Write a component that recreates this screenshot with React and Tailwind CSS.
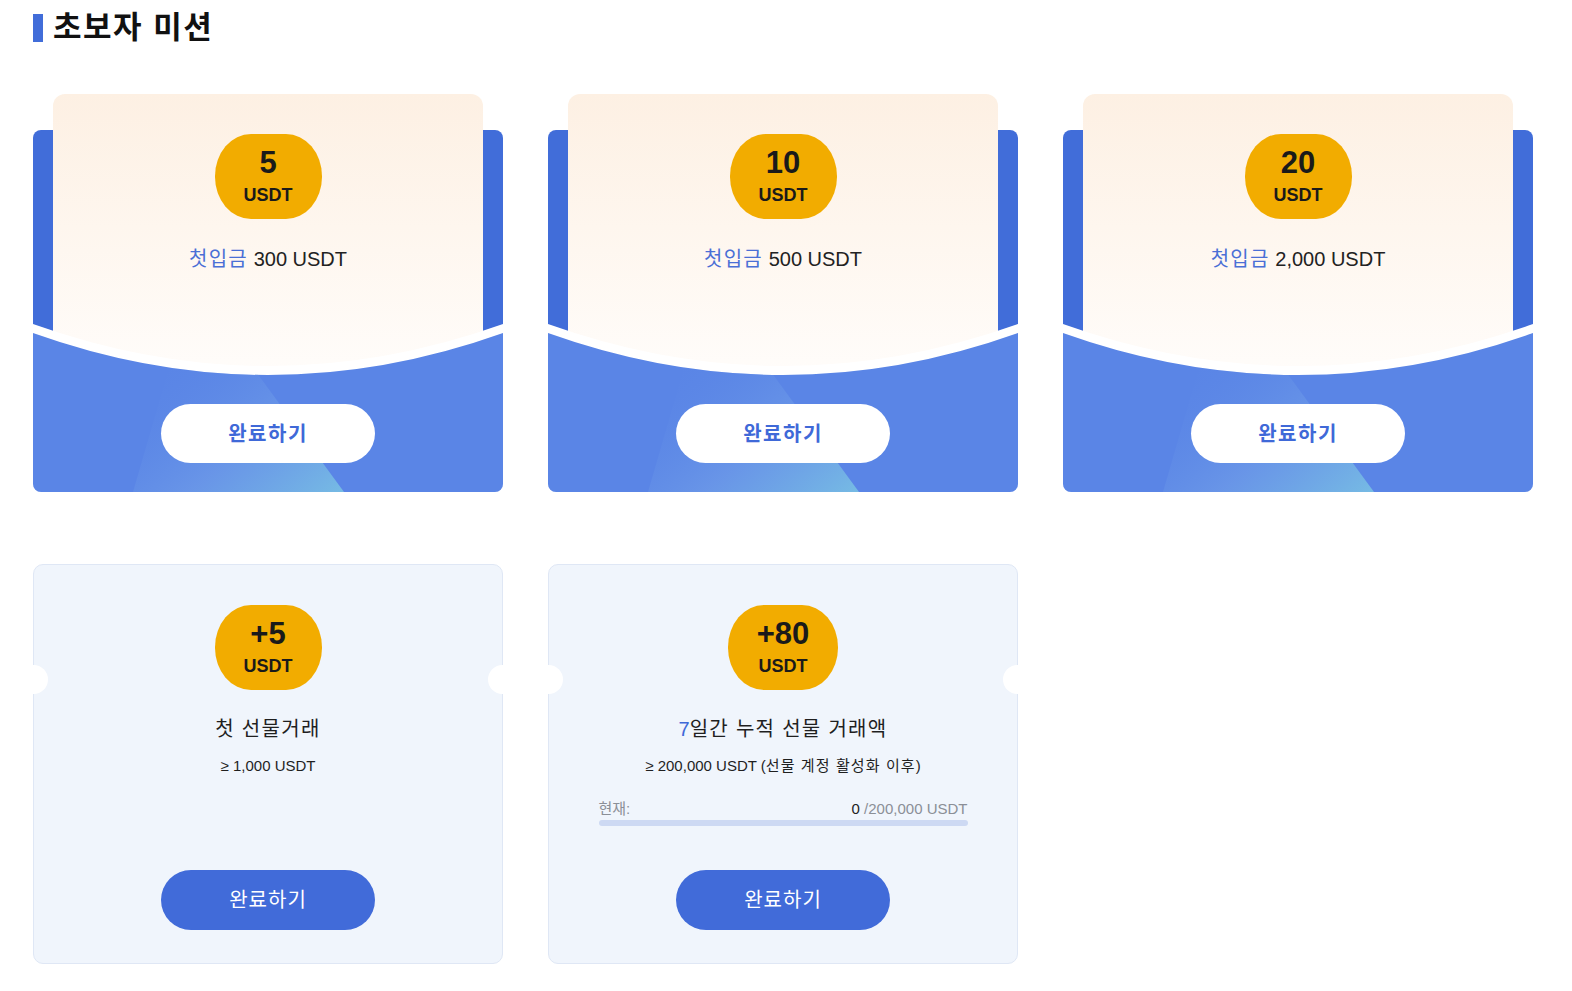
import React from 'react';

const topMissions = [
  { reward: '5', amount: '300 USDT' },
  { reward: '10', amount: '500 USDT' },
  { reward: '20', amount: '2,000 USDT' },
];

// korean glyphs in the original render a bit wider, so spread them a little
const ko = 'tracking-[1.3px]';

function Badge({ value }) {
  return (
    <div className="flex h-[85px] min-w-[107px] flex-col items-center rounded-[36px/42px] bg-[#f2ac00] px-[29px] pt-[14px] text-[#1a1a1a]">
      <span className="text-[31px] font-bold leading-[30px]">{value}</span>
      <span className="mt-[8px] text-[18px] font-bold leading-[18px]">USDT</span>
    </div>
  );
}

function DepositCard({ reward, amount, idx }) {
  return (
    <div className="relative h-[398px] w-[470px] overflow-hidden rounded-b-lg">
      <div className="absolute inset-x-0 top-[36px] bottom-0 rounded-lg bg-[#416dd9]" />
      <div className="relative mx-5 flex h-[290px] flex-col items-center rounded-t-xl bg-gradient-to-b from-[#fdf0e3] to-[#fffdfb] pt-[40px]">
        <Badge value={reward} />
        <p className="mt-[26px] text-[20px] leading-[28px] text-[#222]">
          <span className={`text-[#4a6fd6] ${ko}`}>첫입금</span> {amount}
        </p>
      </div>
      <svg className="absolute bottom-0 left-0" width="470" height="168" viewBox="0 0 470 168">
        <defs>
          <clipPath id={`lower-${idx}`}>
            <path d="M0 9 Q235 93 470 9 L470 168 L0 168 Z" />
          </clipPath>
          <linearGradient id={`band-${idx}`} x1="0" y1="0.2" x2="1" y2="1">
            <stop offset="0" stopColor="#5a85e6" stopOpacity="0" />
            <stop offset="0.55" stopColor="#6c99e8" stopOpacity="0.8" />
            <stop offset="1" stopColor="#76bbe4" stopOpacity="1" />
          </linearGradient>
        </defs>
        <path d="M0 0 Q235 84 470 0 L470 168 L0 168 Z" fill="#ffffff" />
        <path d="M0 9 Q235 93 470 9 L470 168 L0 168 Z" fill="#5a85e6" />
        <g clipPath={`url(#lower-${idx})`}>
          <polygon points="140,30 210,30 311,168 100,168" fill={`url(#band-${idx})`} />
        </g>
      </svg>
      <button className="absolute bottom-[29px] left-1/2 h-[59px] w-[214px] -translate-x-1/2 rounded-full bg-white text-[20px] font-bold tracking-[1.5px] text-[#3f69d8]">
        완료하기
      </button>
    </div>
  );
}

function TicketCard({ children, reward }) {
  return (
    <div className="relative flex h-[400px] w-[470px] flex-col items-center rounded-[10px] border border-[#dfe7f5] bg-[#f0f5fc] pt-[40px] pb-[33px]">
      <div className="absolute top-[100px] left-[-15px] h-[29px] w-[29px] rounded-full bg-white" />
      <div className="absolute top-[100px] right-[-15px] h-[29px] w-[29px] rounded-full bg-white" />
      <Badge value={reward} />
      {children}
      <button className="mt-auto h-[60px] w-[214px] rounded-full bg-[#416bd9] text-[20px] tracking-[1px] text-white">
        완료하기
      </button>
    </div>
  );
}

export default function App() {
  return (
    <div className="min-h-screen bg-white px-[33px] pt-[14px] font-['Liberation_Sans','Noto_Sans_CJK_KR',sans-serif] text-[#1f1f1f]">
      <div className="flex items-center gap-[10px]">
        <div className="h-[28px] w-[10px] bg-[#416dd9]" />
        <h1 className="text-[31px] font-bold leading-[28px] tracking-[1.5px] text-[#111]">초보자 미션</h1>
      </div>

      <div className="mt-[52px] grid grid-cols-[repeat(3,470px)] gap-x-[45px] gap-y-[72px]">
        {topMissions.map((m, i) => (
          <DepositCard key={i} idx={i} reward={m.reward} amount={m.amount} />
        ))}

        <TicketCard reward="+5">
          <p className={`mt-[25px] text-[20px] leading-[28px] ${ko}`}>첫 선물거래</p>
          <p className="mt-[13px] text-[15px] leading-[20px]">≥ 1,000 USDT</p>
        </TicketCard>

        <TicketCard reward="+80">
          <p className="mt-[25px] text-[20px] leading-[28px]">
            <span className="text-[#3f69d8]">7</span>
            <span className={ko}>일간 누적 선물 거래액</span>
          </p>
          <p className="mt-[13px] text-[15px] leading-[20px]">
            ≥ 200,000 USDT (<span className="tracking-[1.1px]">선물 계정 활성화 이후</span>)
          </p>
          <div className="mt-[23px] w-[369px]">
            <div className="flex justify-between text-[15px] leading-[20px] text-[#8b8f97]">
              <span>현재:</span>
              <span>
                <span className="text-[#222]">0</span> /200,000 USDT
              </span>
            </div>
            <div className="mt-px h-[6px] rounded-full bg-[#cdd9f3]" />
          </div>
        </TicketCard>
      </div>
    </div>
  );
}
